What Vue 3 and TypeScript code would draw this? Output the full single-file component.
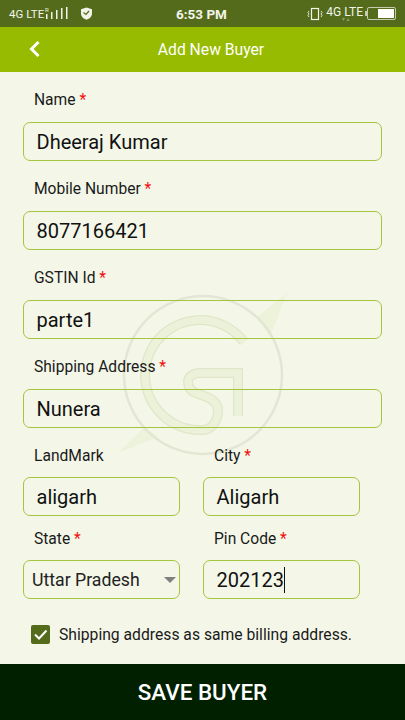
<template>
  <div class="screen">
    <div class="status-bar">
      <div class="status-left">
        <span class="net">4G LTE</span>
        <svg class="signal" width="24" height="15" viewBox="0 0 24 15">
          <text x="0" y="6" class="roaming">R</text>
          <rect x="1" y="8" width="1.5" height="5" />
          <rect x="6" y="6" width="1.5" height="7" />
          <rect x="11" y="4" width="1.5" height="9" />
          <rect x="16" y="2" width="1.5" height="11" />
          <rect x="21" y="1" width="1.5" height="12" />
        </svg>
        <svg class="shield" width="13" height="13" viewBox="0 0 13 13">
          <path d="M6.5 0.5 L12 2.2 V6.5 C12 9.5 9.5 11.8 6.5 12.8 C3.5 11.8 1 9.5 1 6.5 V2.2 Z" fill="#f2f4ea" />
          <path d="M3.5 5.5 L6 7.5 L9 4" fill="none" stroke="#556b1c" stroke-width="1.2" />
        </svg>
      </div>
      <span class="clock">6:53 PM</span>
      <div class="status-right">
        <svg class="vibrate" width="16" height="14" viewBox="0 0 16 14" fill="none" stroke="#f2f4ea">
          <rect x="4.5" y="1.5" width="7" height="11" stroke-width="1.2" />
          <path d="M2 4 L1 5.5 L2 7 L1 8.5 L2 10 M14 4 L15 5.5 L14 7 L15 8.5 L14 10" stroke-width="0.9" />
        </svg>
        <span class="net net-right">
          4G LTE
          <svg class="data-arrows" width="8" height="4" viewBox="0 0 8 4">
            <path d="M0 0 H3 L1.5 3 Z M4.5 3 H7.5 L6 0 Z" fill="#8e9d6a" />
          </svg>
        </span>
        <i class="battery-nub"></i>
        <div class="battery"><div class="battery-fill"></div></div>
      </div>
    </div>

    <header class="app-header">
      <svg class="back" width="14" height="18" viewBox="0 0 14 18">
        <path d="M10.5 2 L3.5 9 L10.5 16" fill="none" stroke="#fff" stroke-width="3" />
      </svg>
      <h1>Add New Buyer</h1>
    </header>

    <main class="form-area">
      <svg class="watermark" width="200" height="180" viewBox="100 280 200 180" fill="none">
        <path d="M287 293 L257 317 L270 337 Z" fill="#edf2da" />
        <path d="M118 453 L145 427 L158 437 Z" fill="#edf2da" />
        <circle cx="203" cy="375" r="79" stroke="#e2e6d3" stroke-width="2.5" />
        <path :d="logoPath" stroke="#e0e7c8" stroke-width="10" />
        <path :d="logoPath" stroke="#ecf1da" stroke-width="7.5" />
      </svg>

      <div v-for="field in fullFields" :key="field.label" class="field">
        <label>{{ field.label }} <em>*</em></label>
        <div class="box box-text">{{ field.value }}</div>
      </div>

      <div class="pair">
        <div class="field half">
          <label>LandMark</label>
          <div class="box box-text">aligarh</div>
        </div>
        <div class="field half">
          <label>City <em>*</em></label>
          <div class="box box-text">Aligarh</div>
        </div>
      </div>

      <div class="pair pair-second">
        <div class="field half">
          <label>State <em>*</em></label>
          <div class="box box-select">
            <span>Uttar Pradesh</span>
            <i class="caret"></i>
          </div>
        </div>
        <div class="field half">
          <label>Pin Code <em>*</em></label>
          <div class="box box-text">202123<i class="cursor"></i></div>
        </div>
      </div>

      <div class="same-address">
        <span class="checkbox">
          <svg width="19" height="19" viewBox="0 0 19 19">
            <path d="M4 9.5 L8 13.5 L15.5 5.5" fill="none" stroke="#fff" stroke-width="2" />
          </svg>
        </span>
        <span>Shipping address as same billing address.</span>
      </div>
    </main>

    <button class="save" type="button">SAVE BUYER</button>
  </div>
</template>

<script setup lang="ts">
interface Field {
  label: string;
  value: string;
}

const fullFields: Field[] = [
  { label: "Name", value: "Dheeraj Kumar" },
  { label: "Mobile Number", value: "8077166421" },
  { label: "GSTIN Id", value: "parte1" },
  { label: "Shipping Address", value: "Nunera" },
];

// the "GS" mark behind the form, in page coordinates
const logoPath =
  "M244 342 A55 55 0 1 0 203 430 C212 430 218 420 218 411 C218 402 210 398 204 396 L196 393 C190 391 188 386 188 382 C188 376 194 373 200 373 L238 373 V416";
</script>

<style>
html,
body {
  margin: 0;
  background: #f4f7e8;
}
</style>

<style scoped>
.screen {
  display: flex;
  flex-direction: column;
  width: 405px;
  height: 720px;
  overflow: hidden;
  background: #f4f7e8;
  font-family: Roboto, "Liberation Sans", sans-serif;
  color: #1a1a1a;
}

.status-bar {
  display: flex;
  align-items: center;
  justify-content: space-between;
  flex: 0 0 27px;
  padding: 0 9px;
  background: #556b1c;
  color: #f2f4ea;
  position: relative;
}

.status-left,
.status-right {
  display: flex;
  align-items: center;
}

.net {
  font-size: 11.5px;
}

.net-right {
  position: relative;
  margin: 0 2px 3px 3px;
  font-size: 12px;
}

.data-arrows {
  position: absolute;
  left: 16px;
  top: 13px;
}

.vibrate {
  flex: none;
}

.signal {
  margin-left: 1px;
  fill: #f2f4ea;
}

.roaming {
  font-size: 6px;
}

.shield {
  margin-left: 11px;
}

.clock {
  position: absolute;
  left: 176px;
  font-size: 13.5px;
  font-weight: 700;
}

.battery-nub {
  width: 2px;
  height: 5px;
  background: #c5ccb0;
}

.battery {
  display: flex;
  justify-content: flex-end;
  width: 25px;
  height: 9px;
  padding: 1px;
  border: 1px solid #c5ccb0;
  border-radius: 2px;
}

.battery-fill {
  width: 16px;
  background: #fff;
}

.app-header {
  display: flex;
  align-items: center;
  justify-content: center;
  flex: 0 0 45px;
  padding-left: 17px;
  background: #97bb00;
  position: relative;
}

.app-header h1 {
  margin: 0;
  font-size: 15.7px;
  font-weight: 400;
  color: #fff;
}

.back {
  position: absolute;
  left: 28px;
  top: 13px;
}

.form-area {
  flex: 1;
  padding: 18px 23px 0;
  position: relative;
}

.watermark {
  position: absolute;
  left: 100px;
  top: 208px;
}

.field {
  position: relative;
  margin-bottom: 18px;
}

.field label {
  display: block;
  height: 20px;
  margin: 0 0 12px 11px;
  font-size: 15.6px;
  line-height: 20px;
}

.field em {
  font-style: normal;
  color: #f01010;
}

.box {
  display: flex;
  align-items: center;
  box-sizing: border-box;
  height: 39px;
  border: 1px solid #a5c440;
  border-radius: 7px;
  font-size: 20px;
  color: #111;
}

.box-text {
  padding-left: 12.5px;
}

.box-select {
  justify-content: space-between;
  padding: 0 3px 0 8px;
  font-size: 17.7px;
  color: #222;
}

.caret {
  border-left: 6px solid transparent;
  border-right: 6px solid transparent;
  border-top: 6px solid #808080;
}

.cursor {
  width: 1px;
  height: 26px;
  background: #111;
}

.pair {
  display: flex;
  gap: 23px;
}

.half {
  width: 157px;
}

.pair .field {
  margin-bottom: 0;
}

.pair label {
  margin-bottom: 11px;
}

.pair-second {
  margin-top: 13px;
}

.same-address {
  display: flex;
  align-items: center;
  gap: 9px;
  margin: 26px 0 0 8px;
  font-size: 15.7px;
}

.checkbox {
  display: block;
  flex: none;
  width: 19px;
  height: 19px;
  border-radius: 2px;
  background: #556b1c;
}

.checkbox svg {
  display: block;
}

.save {
  flex: 0 0 56px;
  border: none;
  padding: 0;
  background: #002000;
  color: #fff;
  font-family: Roboto, "Liberation Sans", sans-serif;
  font-size: 22.4px;
  font-weight: 500;
}
</style>
